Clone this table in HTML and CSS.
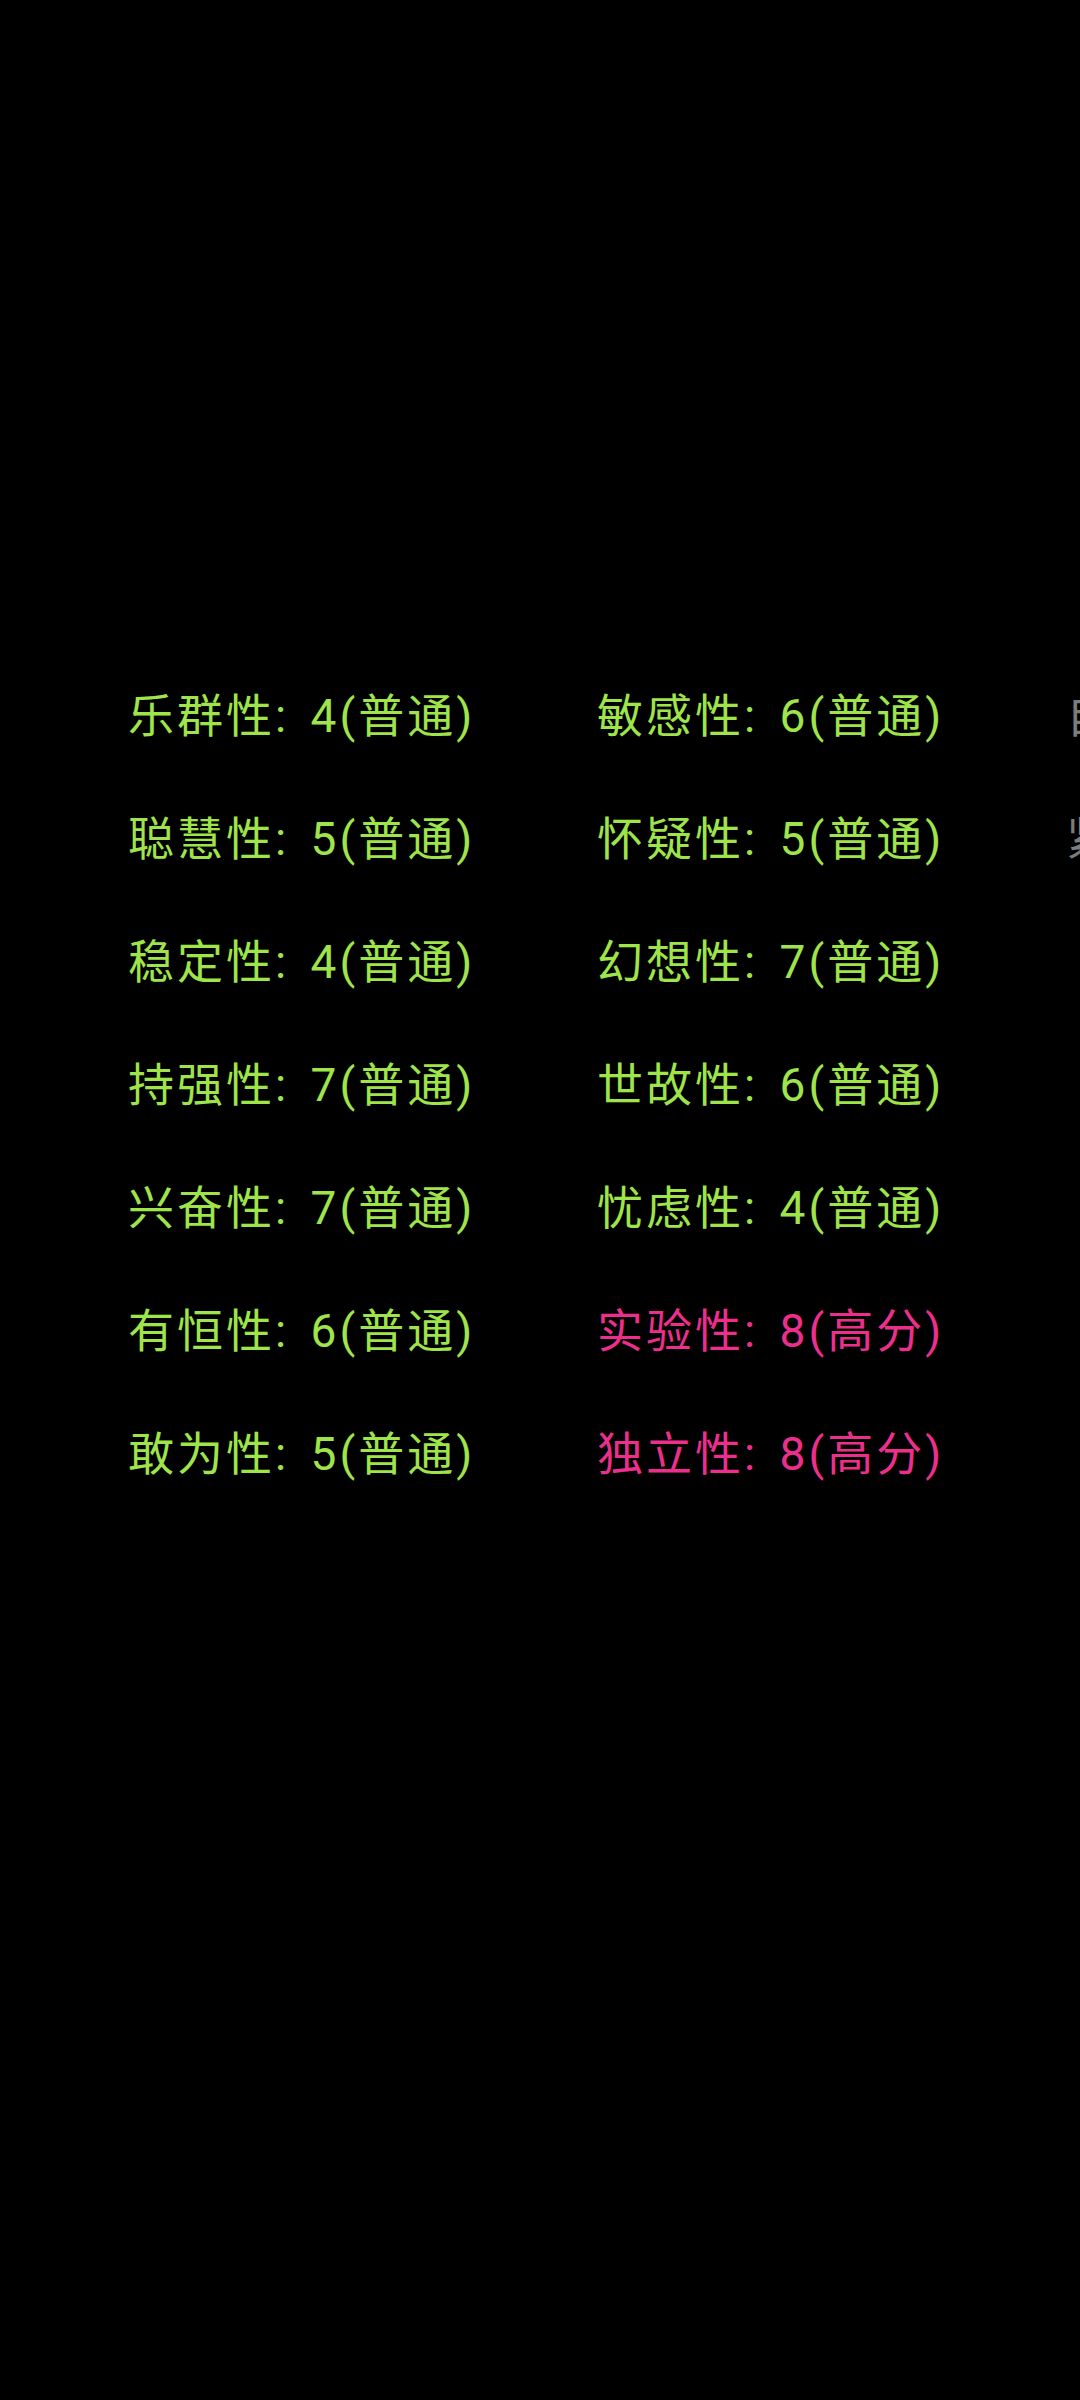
FILE: index.html
```html
<!DOCTYPE html>
<html lang="zh-CN">
<head>
<meta charset="utf-8">
<title>16PF</title>
<link rel="stylesheet" href="styles.css">
</head>
<body>
<div class="viewport">
  <div class="grid">
    <div class="item normal">乐群性: 4(普通)</div>
    <div class="item normal">聪慧性: 5(普通)</div>
    <div class="item normal">稳定性: 4(普通)</div>
    <div class="item normal">持强性: 7(普通)</div>
    <div class="item normal">兴奋性: 7(普通)</div>
    <div class="item normal">有恒性: 6(普通)</div>
    <div class="item normal">敢为性: 5(普通)</div>
    <div class="item normal">敏感性: 6(普通)</div>
    <div class="item normal">怀疑性: 5(普通)</div>
    <div class="item normal">幻想性: 7(普通)</div>
    <div class="item normal">世故性: 6(普通)</div>
    <div class="item normal">忧虑性: 4(普通)</div>
    <div class="item high">实验性: 8(高分)</div>
    <div class="item high">独立性: 8(高分)</div>
    <div class="item muted">自律性: 5(普通)</div>
    <div class="item muted">紧张性: 5(普通)</div>
  </div>
</div>
</body>
</html>
```
FILE: styles.css
```css
html, body {
  margin: 0;
  padding: 0;
  background: #000;
}
body {
  width: 1080px;
  height: 2400px;
  overflow: hidden;
  font-family: Roboto, "Noto Sans CJK SC", sans-serif;
}
.viewport {
  width: 1080px;
  overflow: hidden;
  padding-top: 655px;
}
.grid {
  display: grid;
  grid-template-rows: repeat(7, 123px);
  grid-auto-columns: 469px;
  grid-auto-flow: column;
  padding-left: 128px;
  width: max-content;
}
.item {
  font-size: 46px;
  font-weight: 400;
  line-height: 123px;
  height: 123px;
  white-space: nowrap;
  letter-spacing: 3px;
  word-spacing: 7px;
}
.normal { color: #9ee44a; }
.high { color: #ec2f8d; }
.muted { color: #7c7c7c; }
```
